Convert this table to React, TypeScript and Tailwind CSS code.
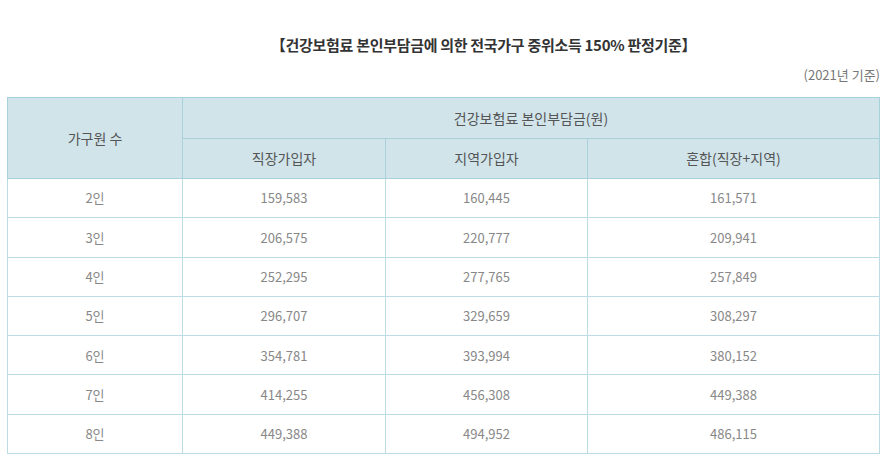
import React from "react";

const rows = [
  ["2인", "159,583", "160,445", "161,571"],
  ["3인", "206,575", "220,777", "209,941"],
  ["4인", "252,295", "277,765", "257,849"],
  ["5인", "296,707", "329,659", "308,297"],
  ["6인", "354,781", "393,994", "380,152"],
  ["7인", "414,255", "456,308", "449,388"],
  ["8인", "449,388", "494,952", "486,115"],
];

export default function App() {
  return (
    <div
      className="w-[893px] h-[456px] bg-white overflow-hidden pl-[7px] pr-[13px]"
      style={{ fontFamily: '"Noto Sans CJK KR", "Noto Sans", sans-serif' }}
    >
      <h2 className="pt-[36px] text-center text-[15px] leading-[18px] font-bold text-[#333] tracking-[-0.3px] pl-[80px]">
        【건강보험료 본인부담금에 의한 전국가구 중위소득 150% 판정기준】
      </h2>
      <p className="mt-[12px] text-right text-[13px] leading-[18px] text-[#777]">(2021년 기준)</p>

      {/* 판정기준 표 */}
      <table className="mt-[13px] w-[873px] border-collapse table-fixed text-center">
        <colgroup>
          <col className="w-[175px]" />
          <col className="w-[203px]" />
          <col className="w-[202px]" />
          <col />
        </colgroup>
        <thead>
          <tr className="h-[41px]">
            <th
              rowSpan={2}
              className="bg-[#d0e4ea] border border-[#a9d1dc] text-[14px] font-normal text-[#555]"
            >
              가구원 수
            </th>
            <th colSpan={3} className="bg-[#d0e4ea] border border-[#a9d1dc] text-[14px] font-normal text-[#555]">
              건강보험료 본인부담금(원)
            </th>
          </tr>
          <tr className="h-[40px]">
            <th className="bg-[#d0e4ea] border border-[#a9d1dc] text-[14px] font-normal text-[#555]">직장가입자</th>
            <th className="bg-[#d0e4ea] border border-[#a9d1dc] text-[14px] font-normal text-[#555]">지역가입자</th>
            <th className="bg-[#d0e4ea] border border-[#a9d1dc] text-[14px] font-normal text-[#555]">혼합(직장+지역)</th>
          </tr>
        </thead>
        <tbody>
          {rows.map((r) => (
            <tr key={r[0]} className="h-[39.3px]">
              {r.map((c, i) => (
                <td key={i} className="border border-[#bcdce4] text-[13px] text-[#888]">
                  {c}
                </td>
              ))}
            </tr>
          ))}
        </tbody>
      </table>
    </div>
  );
}
